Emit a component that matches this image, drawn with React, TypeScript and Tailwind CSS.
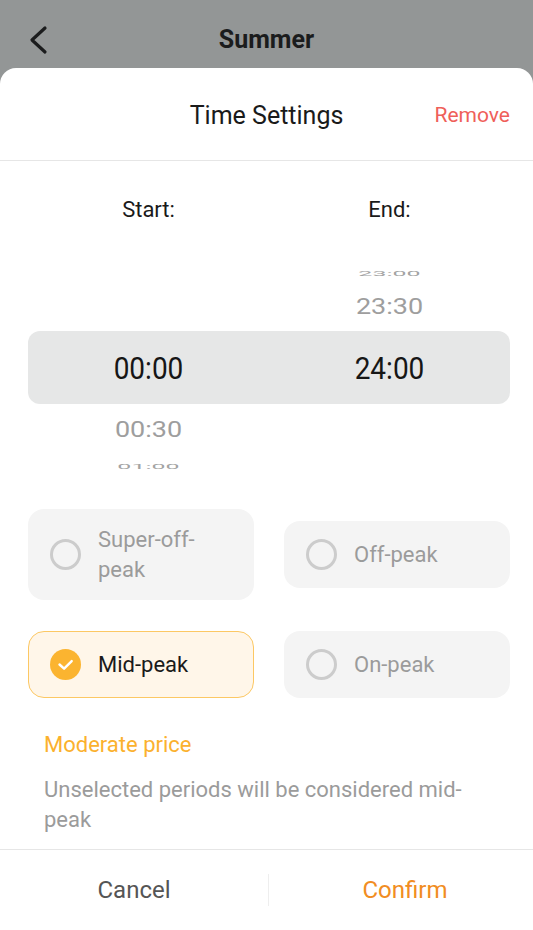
import React from "react";

type Period = { label: string; tall?: boolean; checked?: boolean };

function Radio({ checked }: { checked?: boolean }) {
  if (checked) {
    return (
      <span className="flex h-[31px] w-[31px] shrink-0 items-center justify-center rounded-full bg-[#fbb430]">
        <svg width="31" height="31" viewBox="0 0 31 31" fill="none" stroke="white" strokeWidth="2.4" strokeLinecap="round" strokeLinejoin="round">
          <path d="M9.5 15.5l4.6 4.2 7.6-7.6" />
        </svg>
      </span>
    );
  }
  return <span className="h-[31px] w-[31px] shrink-0 rounded-full border-[3px] border-[#cccccc]" />;
}

function PeriodCard({ label, tall, checked }: Period) {
  return (
    <div
      className={`flex items-center gap-[17px] rounded-[16px] pr-3 ${
        tall ? "h-[91px]" : "h-[67px]"
      } ${checked ? "border border-[#fcc864] bg-[#fff6e9] pl-[21px]" : "bg-[#f4f4f4] pl-[22px]"}`}
    >
      <Radio checked={checked} />
      <span className={`max-w-[120px] text-[22px] leading-[30px] ${checked ? "text-[#1a1a1a]" : "text-[#9b9b9b]"}`}>
        {label}
      </span>
    </div>
  );
}

export default function App() {
  return (
    <div className="flex h-[930px] w-[533px] flex-col overflow-hidden bg-[#939696] font-['Roboto',sans-serif]">
      {/* page behind the sheet */}
      <div className="relative flex h-[68px] shrink-0 items-center justify-center pt-[12px]">
        <svg className="absolute left-[26px] top-[23px]" width="26" height="34" viewBox="0 0 26 34" fill="none" stroke="#1b1c1d" strokeWidth="3.2" strokeLinecap="round" strokeLinejoin="round">
          <path d="M19 5L6 17l13 12" />
        </svg>
        <span className="text-[25px] font-bold text-[#1b1c1d]">Summer</span>
      </div>

      <div className="flex flex-1 flex-col rounded-t-[16px] bg-white">
        {/* header */}
        <div className="relative flex h-[93px] shrink-0 items-center justify-center border-b border-[#e6e6e6] pt-[3px]">
          <span className="text-[25px] text-[#1a1a1a]">Time Settings</span>
          <span className="absolute right-[23px] top-[32px] text-[21px] text-[#ef5f5a]">Remove</span>
        </div>

        {/* wheel picker */}
        <div className="ml-[28px] mr-[23px] flex flex-col">
          <div className="mt-[32px] grid h-[30px] grid-cols-2 items-center text-center text-[22px] text-[#1a1a1a]">
            <span>Start:</span>
            <span>End:</span>
          </div>
          <div className="mt-[32px] grid h-[24px] grid-cols-2 items-center text-center text-[25px] text-[#a3a3a3]">
            <span />
            <span className="scale-y-[0.3]">23:00</span>
          </div>
          <div className="grid h-[52px] grid-cols-2 items-center pt-[4px] text-center text-[27px] text-[#9e9e9e]">
            <span />
            <span className="scale-y-[0.8]">23:30</span>
          </div>
          <div className="grid h-[73px] grid-cols-2 items-center rounded-[12px] bg-[#e6e7e7] pt-[3px] text-center text-[28px] text-[#161616]">
            <span className="scale-y-[1.15]">00:00</span>
            <span className="scale-y-[1.15]">24:00</span>
          </div>
          <div className="grid h-[44px] grid-cols-2 items-center pt-[6px] text-center text-[27px] text-[#9e9e9e]">
            <span className="scale-y-[0.8]">00:30</span>
            <span />
          </div>
          <div className="grid h-[24px] grid-cols-2 items-center text-center text-[25px] text-[#a3a3a3]">
            <span className="scale-y-[0.3]">01:00</span>
            <span />
          </div>
        </div>

        {/* periods */}
        <div className="ml-[28px] mr-[23px] mt-[37px] grid grid-cols-2 items-center gap-x-[30px] gap-y-[31px]">
          <PeriodCard label="Super-off-peak" tall />
          <PeriodCard label="Off-peak" />
          <PeriodCard label="Mid-peak" checked />
          <PeriodCard label="On-peak" />
        </div>

        <div className="mx-[44px] mt-[32px] text-[22px] leading-[30px] text-[#fbb12e]">Moderate price</div>
        <div className="ml-[44px] mr-[40px] mt-[15px] text-[22px] leading-[30px] text-[#9b9b9b]">
          Unselected periods will be considered mid-peak
        </div>

        {/* actions */}
        <div className="mt-auto flex h-[81px] items-center border-t border-[#e6e6e6]">
          <button className="w-[268px] text-[24px] text-[#555555]">Cancel</button>
          <span className="h-[32px] w-px bg-[#eeeeee]" />
          <button className="flex-1 pl-[8px] text-[24px] text-[#f18d22]">Confirm</button>
        </div>
      </div>
    </div>
  );
}
